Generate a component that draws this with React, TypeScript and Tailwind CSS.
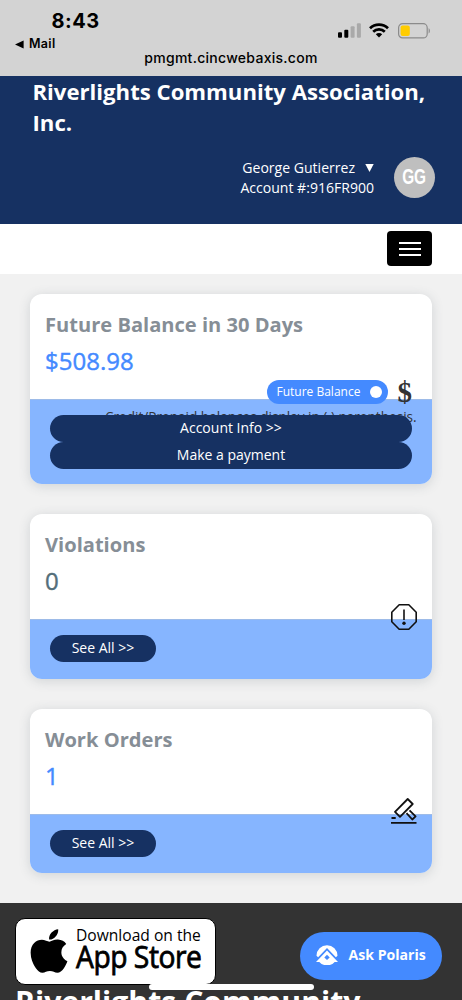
import React from "react";
import { FaApple } from "react-icons/fa";

const StatusBar: React.FC = () => (
  <div className="h-[76px] bg-[#d3d3d3] text-black font-['Inter',sans-serif] overflow-hidden">
    <div className="flex justify-between pl-[51.5px] pr-[31px] pt-[10px] h-[36px]">
      <span className="text-[20px] leading-[23px] font-bold tracking-[0.5px]">8:43</span>
      <div className="flex items-start gap-[8px] pt-[13px]">
        <svg width="23" height="15" viewBox="0 0 23 15">
          <rect x="0" y="9.3" width="4" height="5.5" rx="1" fill="#000" />
          <rect x="6.3" y="6.7" width="4" height="8.1" rx="1" fill="#000" />
          <rect x="12.6" y="3.2" width="4" height="11.6" rx="1" fill="#a9a9a9" />
          <rect x="18.9" y="0.3" width="4" height="14.5" rx="1" fill="#a9a9a9" />
        </svg>
        <svg width="20" height="15" viewBox="0 0 20 15" fill="none" stroke="#000" strokeWidth="2.7">
          <path d="M1 5.3a12.8 12.8 0 0 1 18 0" />
          <path d="M4.2 8.7a8.3 8.3 0 0 1 11.6 0" />
          <path d="M10 14.6 6.8 11.3a4.6 4.6 0 0 1 6.4 0Z" fill="#000" stroke="none" />
        </svg>
        <svg width="34" height="16" viewBox="0 0 34 16">
          <rect x="1.6" y="0.7" width="28.6" height="14.2" rx="4" fill="none" stroke="#8b8b8b" strokeWidth="1.2" />
          <rect x="3.6" y="2.6" width="9.2" height="10.4" rx="2" fill="#ffcc00" />
          <path d="M31.6 5.3c1.7.5 1.7 4.7 0 5.2Z" fill="#8b8b8b" />
        </svg>
      </div>
    </div>
    <div className="flex items-center gap-[5px] pl-[15px] h-[16px] text-[12.5px] leading-4 font-semibold tracking-[0.3px]">
      <svg width="9" height="9" viewBox="0 0 9 9">
        <path d="M0 4.5 8.6 0.6v7.8Z" fill="#000" />
      </svg>
      Mail
    </div>
    <p className="text-center text-[14px] leading-[16px] mt-[-2px] font-medium tracking-[0.28px]">
      pmgmt.cincwebaxis.com
    </p>
  </div>
);

const Header: React.FC = () => (
  <header className="h-[147.5px] bg-[#163162] text-white pr-[27px] pl-[32.5px]">
    <h1 className="text-[22.15px] leading-[31px] font-bold h-[78px] whitespace-nowrap">
      Riverlights Community Association,
      <br />
      Inc.
    </h1>
    <div className="flex justify-end gap-5">
      <div className="text-right text-[14.05px] leading-[20px] pt-[4px] whitespace-nowrap">
        <p className="flex items-center justify-end gap-[10px]">
          George Gutierrez
          <svg width="9" height="8" viewBox="0 0 9 8">
            <path d="M0.3 0h8.4L4.5 8Z" fill="#fff" />
          </svg>
        </p>
        <p>Account #:916FR900</p>
      </div>
      <div className="mt-[3px] size-[41px] rounded-full bg-[#bfbfbf] flex items-center justify-center">
        <span className="mt-[-2px] text-[22px] font-bold font-['Liberation_Sans',sans-serif] scale-x-[0.7]">GG</span>
      </div>
    </div>
  </header>
);

const pill = "rounded-full bg-[#163162] text-white text-[14px] leading-[26px] text-center h-[27px]";

type CardProps = {
  title: string;
  value: string;
  valueClass: string;
  bodyClass: string;
  corner: React.ReactNode;
  children: React.ReactNode;
};

const Card: React.FC<CardProps> = ({ title, value, valueClass, bodyClass, corner, children }) => (
  <section className="relative rounded-[12px] bg-white shadow-[0_2px_12px_rgba(60,80,90,0.18)]">
    <div className="h-[105px] px-[15px] pt-[16px]">
      <h2 className="text-[20.1px] leading-[30px] font-bold text-[#868e96]">{title}</h2>
      <p className={`text-[24px] leading-[34px] mt-[4px] [-webkit-text-stroke:0.4px] ${valueClass}`}>{value}</p>
    </div>
    <div className={`bg-[#86b5ff] border-t border-[#9dbbe8] rounded-b-[12px] px-5 pt-[15px] ${bodyClass}`}>
      {children}
    </div>
    {corner}
  </section>
);

const ViolationIcon: React.FC = () => (
  <svg
    className="absolute left-[361px] top-[90px]"
    width="26"
    height="26"
    viewBox="0 0 26 26"
    fill="none"
    stroke="#111"
    strokeWidth="1.6"
  >
    <path d="M8.2 0.8h9.6l7.4 7.4v9.6l-7.4 7.4H8.2L0.8 17.8V8.2Z" strokeLinejoin="round" />
    <path d="M13 5.5v10.5" />
    <circle cx="13" cy="19.2" r="1.7" fill="#111" stroke="none" />
  </svg>
);

const GavelIcon: React.FC = () => (
  <svg
    className="absolute left-[361px] top-[89px]"
    width="26"
    height="26"
    viewBox="0 0 26 26"
    fill="none"
    stroke="#111"
    strokeWidth="1.8"
    strokeLinejoin="round"
  >
    <path d="M4 13.8 16.7 1l5 5L9 18.8Z" />
    <path d="m15.500 15.200 5.800 6.300 3.300-3.100-6.100-6" />
    <path d="M0.5 20h4.2M0 24.9h25.5" />
  </svg>
);

const PolarisLogo: React.FC = () => (
  <svg width="22" height="21" viewBox="0 0 22 21">
    <path d="M0.5 11.7A10.5 10.5 0 0 1 21.5 11.7L19.900 13.2 11 4 2.1 13.2Z" fill="#fff" />
    <path d="M11 6.5 22 18h-3.3A10.5 10.5 0 0 1 3.3 18H0Z" fill="#fff" />
    <path d="m11 10.7 2.7 2.7-2.7 2.7-2.7-2.7Z" fill="#448aff" />
  </svg>
);

const App: React.FC = () => {
  return (
    <div className="relative h-[1000px] w-[462px] overflow-hidden bg-[#f1f1f1] font-['Open_Sans',sans-serif]">
      <StatusBar />
      <Header />
      <nav className="h-[50.5px] bg-white flex justify-end items-center pr-[30px]">
        <button className="w-[45px] h-[35px] rounded-[4px] bg-black flex flex-col items-center justify-center gap-1">
          <span className="w-[22px] h-[2px] bg-white" />
          <span className="w-[22px] h-[2px] bg-white" />
          <span className="w-[22px] h-[2px] bg-white" />
        </button>
      </nav>

      <main className="px-[30px] pt-5 flex flex-col gap-[30px]">
        <Card
          title="Future Balance in 30 Days"
          value="$508.98"
          valueClass="text-[#448aff]"
          bodyClass="pb-[15px]"
          corner={
            <div className="absolute right-[20px] top-[83px] flex items-center gap-[10px]">
              <div className="h-[24px] w-[121px] rounded-full bg-[#448aff] text-white text-[12px] flex items-center justify-between pl-[10px] pr-[6px]">
                Future Balance
                <span className="size-[12px] rounded-full bg-white" />
              </div>
              <span className="text-[29px] leading-[30px] font-bold text-[#333] font-['Liberation_Serif',serif]">$</span>
            </div>
          }
        >
          <p className="absolute left-[75px] top-[114px] text-[13.6px] leading-[18px] font-medium text-[#333] whitespace-nowrap">
            Credit/Prepaid balances display in ( ) parenthesis.
          </p>
          <div className="relative">
            <div className={pill}>Account Info &gt;&gt;</div>
            <div className={pill}>Make a payment</div>
          </div>
        </Card>

        <Card
          title="Violations"
          value="0"
          valueClass="text-[#546e7a]"
          bodyClass="pb-[17px]"
          corner={<ViolationIcon />}
        >
          <div className={`${pill} w-[106px]`}>See All &gt;&gt;</div>
        </Card>

        <Card
          title="Work Orders"
          value="1"
          valueClass="text-[#448aff]"
          bodyClass="pb-[16px]"
          corner={<GavelIcon />}
        >
          <div className={`${pill} w-[106px]`}>See All &gt;&gt;</div>
        </Card>
      </main>

      <footer className="mt-[30px] h-[110px] bg-[#333] px-[15px] pt-[15px] text-white">
        <div className="w-[201px] h-[67px] rounded-[10px] border-[1.5px] border-black bg-white text-black flex items-start pl-[8px]">
          <FaApple size={50} className="mt-[7px]" />
          <div className="pl-[2px] pt-[6px] whitespace-nowrap">
            <p className="text-[15.6px] leading-[20px]">Download on the</p>
            <p className="mt-[-2px] text-[31px] leading-[27px] origin-left scale-x-[0.91] tracking-[-0.5px] [-webkit-text-stroke:0.8px]">
              App Store
            </p>
          </div>
        </div>
        <h2 className="mt-[-1px] text-[30.2px] leading-[36px] font-bold whitespace-nowrap">Riverlights Community</h2>
      </footer>

      <button className="absolute left-[299.5px] top-[932px] w-[142px] h-[47.5px] rounded-full bg-[#448aff] text-white flex items-center gap-[11px] pl-[16px] pb-[2px] text-[14.1px] font-bold">
        <PolarisLogo />
        Ask Polaris
      </button>
      <div className="absolute left-[149px] top-[984px] w-[165px] h-[6px] rounded-full bg-white" />
    </div>
  );
};

export default App;
